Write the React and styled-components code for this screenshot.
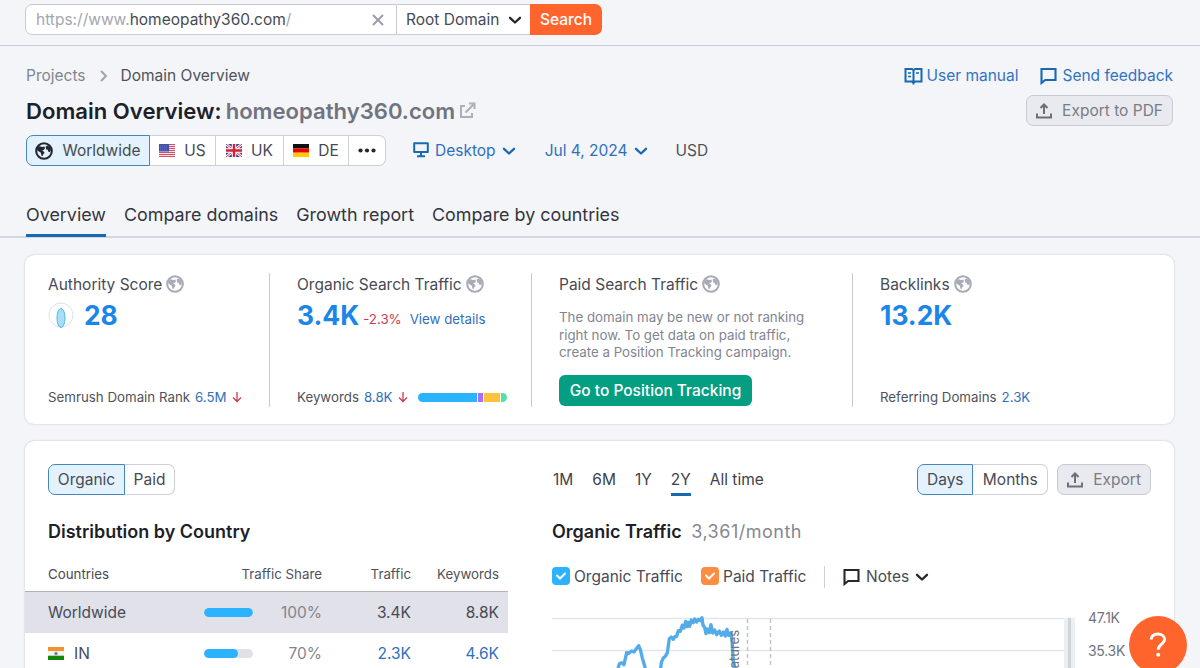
import React from 'react';
import styled, { createGlobalStyle, css } from 'styled-components';

const GlobalStyle = createGlobalStyle`
  * {
    box-sizing: border-box;
  }

  body {
    margin: 0;
    background: #f4f5f9;
    color: #484a54;
    font-family: Inter, "Liberation Sans", sans-serif;
    font-size: 15.5px;
    line-height: 20px;
    overflow: hidden;
  }

  svg {
    display: block;
    flex: none;
  }
`;

const Page = styled.div`
  height: 668px;
  overflow: hidden;
`;

const SearchBar = styled.div`
  display: flex;
  height: 46px;
  padding: 4px 0 0 25px;
  border-bottom: 1px solid #c9cdd9;
`;

const UrlField = styled.div`
  display: flex;
  align-items: center;
  justify-content: space-between;
  width: 372px;
  height: 31px;
  padding: 0 12px 0 10px;
  background: #fff;
  border: 1px solid #c8cbd4;
  border-radius: 7px 0 0 7px;
  color: #a3a6b1;

  b {
    font-weight: 400;
    color: #484a52;
  }
`;

const ScopeSelect = styled.div`
  display: flex;
  align-items: center;
  justify-content: space-between;
  width: 133px;
  height: 31px;
  padding: 0 8px 0 9px;
  background: #fff;
  border: solid #c8cbd4;
  border-width: 1px 0;
`;

const SearchButton = styled.div`
  width: 72px;
  height: 31px;
  padding-top: 6px;
  background: #ff642d;
  border-radius: 0 7px 7px 0;
  color: #fff;
  font-weight: 500;
  text-align: center;
`;

const Header = styled.header`
  height: 192px;
  padding: 20px 27px 0 26px;
  border-bottom: 2px solid #d3d6df;
`;

const HeaderRow = styled.div`
  display: flex;
  align-items: center;
  justify-content: space-between;
  height: ${({ $height }) => $height}px;
`;

const Group = styled.div`
  display: flex;
  align-items: center;
  gap: ${({ $gap = 0 }) => $gap}px;
`;

const Crumb = styled.span`
  color: ${({ $current }) => ($current ? '#50525a' : '#82858f')};
`;

const HelpLink = styled.span`
  display: flex;
  align-items: center;
  gap: ${({ $gap }) => $gap}px;
  color: #3273c0;

  svg {
    margin-top: -1px;
  }
`;

const Title = styled.h1`
  display: flex;
  align-items: center;
  gap: 4px;
  margin: 0;
  color: #1d1f29;
  font-size: 22.1px;
  font-weight: 600;
  line-height: 28px;

  span {
    color: #717480;
  }
`;

const ExportButton = styled.div`
  display: flex;
  align-items: center;
  gap: 9px;
  height: 31px;
  padding: 0 9px 0 8px;
  background: #e9eaf0;
  border: 1px solid #c8cad4;
  border-radius: 7px;
  color: #797b85;
`;

const Segments = styled.div`
  display: flex;
  height: 31px;
`;

const Segment = styled.div`
  display: flex;
  align-items: center;
  justify-content: center;
  gap: ${({ $gap = 9 }) => $gap}px;
  width: ${({ $width }) => $width}px;
  background: #fff;
  border: 1px solid #cdd0d9;
  border-left-width: 0;

  &:first-child {
    border-left-width: 1px;
    border-radius: 7px 0 0 7px;
  }

  &:last-child {
    border-radius: 0 7px 7px 0;
  }

  ${({ $active }) =>
    $active &&
    css`
      background: #e3f2fc;
      border-color: #4388bd;
    `}
`;

const FilterBar = styled.div`
  display: flex;
  align-items: center;
  height: 31px;
`;

const Filter = styled.div`
  display: flex;
  align-items: center;
  gap: 6px;
  margin-left: ${({ $offset }) => $offset}px;
  color: ${({ $plain }) => ($plain ? '#50525a' : '#2f70bd')};
`;

const Tabs = styled.nav`
  display: flex;
  gap: 18px;
  margin-top: 37px;
`;

const Tab = styled.span`
  height: 34px;
  border-bottom: 3px solid ${({ $active }) => ($active ? '#1769b3' : 'transparent')};
  color: #33353d;
  font-size: 17.9px;
  line-height: 24px;
  white-space: nowrap;
`;

const Card = styled.section`
  display: flex;
  width: 1149px;
  height: ${({ $height }) => $height}px;
  margin: 17px 0 0 25px;
  background: #fff;
  border-radius: 9px;
  box-shadow: 0 0 2px rgba(25, 27, 35, 0.28);
`;

const Metric = styled.div`
  display: flex;
  flex-direction: column;
  width: ${({ $width }) => $width}px;
  height: 134px;
  margin-top: 18px;
  padding: 2px 0 0 ${({ $inset = 27 }) => $inset}px;
  border-right: ${({ $last }) => ($last ? '0' : '1px solid #c9cbd2')};
`;

const MetricLabel = styled.div`
  display: flex;
  align-items: center;
  gap: 4px;
  height: 20px;
  white-space: nowrap;

  svg {
    margin-top: -2px;
  }
`;

const MetricValue = styled.div`
  display: flex;
  align-items: center;
  gap: ${({ $gap = 0 }) => $gap}px;
  height: 36px;
  margin-top: 2px;
  white-space: nowrap;

  strong {
    color: #1b86e8;
    font-size: 26.4px;
    font-weight: 700;
  }
`;

const Small = styled.span`
  color: ${({ $color = '#50525a' }) => $color};
  font-size: 13.3px;
  margin-left: ${({ $offset = 0 }) => $offset}px;
  padding-top: ${({ $drop = 0 }) => $drop}px;
  white-space: nowrap;
`;

const MetricFooter = styled.div`
  display: flex;
  align-items: center;
  gap: 5px;
  height: 20px;
  margin-top: auto;
`;

const KeywordBar = styled.div`
  display: flex;
  gap: 1px;
  width: 89px;
  height: 9px;
  margin-left: 5px;
  border-radius: 5px;
  overflow: hidden;

  i {
    height: 9px;
  }
`;

const Note = styled.p`
  margin: 14px 0 0;
  color: #82858f;
  font-size: 13.3px;
  line-height: 17.7px;
  white-space: nowrap;
`;

const TrackingButton = styled.div`
  width: 193px;
  height: 31px;
  margin-top: 13px;
  padding-top: 6px;
  background: #049f82;
  border-radius: 6px;
  color: #fff;
  font-weight: 500;
  text-align: center;
  white-space: nowrap;
`;

const Distribution = styled.div`
  width: 483px;
  padding-top: 23px;
`;

const SectionTitle = styled.h2`
  margin: 25px 0 0;
  color: #1d1f29;
  font-size: 18px;
  font-weight: 600;
  line-height: 24px;
  white-space: nowrap;

  span {
    margin-left: 5px;
    color: #858892;
    font-weight: 400;
    letter-spacing: 0.5px;
  }
`;

const Inset = styled.div`
  padding-left: 23px;
`;

const Row = styled.div`
  display: grid;
  grid-template-columns: 156px 49px 69px 89px 88px;
  align-items: center;
  height: 41px;
  padding-left: 23px;
  background: ${({ $selected }) => ($selected ? '#e0e1e9' : '#fff')};
`;

const HeadRow = styled(Row)`
  height: 35px;
  margin-top: 13px;
  border-bottom: 1px solid #b0b1bb;
  font-size: 13.3px;
`;

const Cell = styled.span`
  color: ${({ $color = '#50525a' }) => $color};
  text-align: right;
  grid-column: ${({ $span }) => ($span ? '2 / span 2' : 'auto')};
`;

const Country = styled.span`
  display: flex;
  align-items: center;
  gap: 10px;
`;

const ShareTrack = styled.div`
  height: 9px;
  border-radius: 5px;
  background: #e0e1e6;
  overflow: hidden;
`;

const ShareFill = styled.div`
  height: 9px;
  border-radius: 5px;
  background: #2bb3ff;
`;

const Trend = styled.div`
  width: 599px;
  margin-left: 44px;
  padding-top: 23px;
`;

const Ranges = styled.div`
  display: flex;
  gap: 19px;
  padding: 6px 0 0 1px;
`;

const Range = styled.span`
  height: 26px;
  border-bottom: 3px solid ${({ $active }) => ($active ? '#1769b3' : 'transparent')};
  color: #40424a;
`;

const TrendTop = styled.div`
  display: flex;
  justify-content: space-between;
  height: 31px;
`;

const Legend = styled.div`
  display: flex;
  align-items: center;
  height: 22px;
  margin-top: 22px;
`;

const LegendItem = styled.div`
  display: flex;
  align-items: center;
  gap: 4px;
  width: ${({ $width }) => $width}px;
  white-space: nowrap;
`;

const Checkbox = styled.span`
  display: flex;
  align-items: center;
  justify-content: center;
  width: 18px;
  height: 18px;
  margin-top: -2px;
  border-radius: 4px;
  background: ${({ $color }) => $color};
`;

const NotesMenu = styled.div`
  display: flex;
  align-items: center;
  gap: 6px;
  height: 22px;
  padding-left: 18px;
  border-left: 1px solid #cfd1d8;
`;

const Chart = styled.div`
  display: flex;
  margin-top: 21px;
`;

const Axis = styled.div`
  margin: -8px 0 0 13px;
  color: #72757f;
  font-size: 14px;
  line-height: 33px;
  letter-spacing: -0.3px;
`;

const HelpBubble = styled.div`
  position: fixed;
  left: 1129px;
  top: 616px;
  display: flex;
  align-items: center;
  justify-content: center;
  width: 58px;
  height: 58px;
  border-radius: 50%;
  background: #ff642d;
`;

const Chevron = ({ color = '#252730' }) => (
  <svg width="14" height="10" viewBox="0 0 14 10" fill="none" stroke={color} strokeWidth="2.3">
    <path d="M2 2.8 7 7.5 12 2.8" strokeLinecap="round" strokeLinejoin="round" />
  </svg>
);

const Globe = ({ size = 18, color = '#a9abb6' }) => (
  <svg width={size} height={size} viewBox="0 0 18 18">
    <circle cx="9" cy="9" r="7.8" fill="none" stroke={color} strokeWidth="2.1" />
    <path
      fill={color}
      d="M2.2 6.4 4.2 4.2 7.4 5 9.4 4.4 10 6.4 8.6 8 7 8.4 8.8 9.4 9.6 11 8.2 12.2 7.6 14.2 6.4 13.4 5.8 10.8 2.4 8.4ZM10.6 4.6 12.6 3.4 15.4 5.4 15.8 8.4 14.6 10.2 13.2 9.4 12.8 7.8 11.2 7.4Z"
    />
  </svg>
);

const Upload = () => (
  <svg width="18" height="18" viewBox="0 0 18 18" fill="none" stroke="#6c6e79" strokeWidth="2">
    <path d="M2 11.5V15.5H16V11.5M9 12V2.5M5.5 6 9 2.5 12.5 6" />
  </svg>
);

const Bubble = ({ color }) => (
  <svg width="17" height="18" viewBox="0 0 17 18" fill="none" stroke={color} strokeWidth="2.1">
    <path d="M1.5 2H15.5V13H5.2L1.5 16Z" />
  </svg>
);

const Book = () => (
  <svg width="19" height="18" viewBox="0 0 19 18" fill="none" stroke="#1769b3" strokeWidth="2">
    <path d="M9.5 3V17.5M1.5 2H8L9.5 3.2 11 2H17.5V14.5H11L9.5 16 8 14.5H1.5Z" />
    <path d="M4 6H7M4 9.5H7M12 6H15" strokeWidth="1.6" />
  </svg>
);

const Monitor = () => (
  <svg width="16" height="17" viewBox="0 0 16 17" fill="none" stroke="#1769b3" strokeWidth="2">
    <path d="M1.2 1.2H14.8V10H1.2Z" strokeLinejoin="round" />
    <path d="M8 10V14M4 14.2H12" />
  </svg>
);

const External = () => (
  <svg width="17" height="17" viewBox="0 0 17 17" fill="none" stroke="#adafb9" strokeWidth="2">
    <path d="M6 4H2V15H13V11M10 1.5H15.5V7M15.5 1.5 6.5 10.5" />
  </svg>
);

const DownArrow = () => (
  <svg width="10" height="12" viewBox="0 0 10 12" fill="none" stroke="#cf3a50" strokeWidth="1.3">
    <path d="M5 1V10.5M1 6.5 5 10.5 9 6.5" />
  </svg>
);

const Check = () => (
  <svg width="10" height="8" viewBox="0 0 10 8" fill="none" stroke="#fff" strokeWidth="2">
    <path d="M1 3.5 4 6.5 9 1.5" strokeLinecap="round" />
  </svg>
);

const FlagUS = () => (
  <svg width="16" height="13" viewBox="0 0 16 13">
    <path fill="#f3dfe4" d="M0 0H16V13H0Z" />
    <path stroke="#ce5364" strokeWidth="1" d="M0 .5H16M0 2.5H16M0 4.5H16M0 6.5H16M0 8.5H16M0 10.5H16M0 12.5H16" />
    <path fill="#434eae" d="M0 0H10V7.5H0Z" />
    <path stroke="#8189cc" strokeWidth=".7" strokeDasharray="1 1" d="M1 2H9M1 4H9M1 6H9" />
  </svg>
);

const FlagUK = () => (
  <svg width="16" height="13" viewBox="0 0 16 13">
    <path fill="#3c4a94" d="M0 0H16V13H0Z" />
    <path stroke="#fff" strokeWidth="2.6" d="M0 0 16 13M16 0 0 13" />
    <path stroke="#d63343" strokeWidth="1" d="M0 0 16 13M16 0 0 13" />
    <path stroke="#fff" strokeWidth="4.4" d="M8 0V13M0 6.5H16" />
    <path stroke="#d61f33" strokeWidth="2.4" d="M8 0V13M0 6.5H16" />
  </svg>
);

const FlagDE = () => (
  <svg width="16" height="13" viewBox="0 0 16 13">
    <path fill="#111" d="M0 0H16V4.5H0Z" />
    <path fill="#e00" d="M0 4.5H16V8.7H0Z" />
    <path fill="#fc0" d="M0 8.7H16V13H0Z" />
  </svg>
);

const FlagIN = () => (
  <svg width="16" height="13" viewBox="0 0 16 13">
    <path fill="#f0932b" d="M0 0H16V4.3H0Z" />
    <path fill="#f4f5f6" d="M0 4.3H16V8.7H0Z" />
    <path fill="#138808" d="M0 8.7H16V13H0Z" />
    <circle cx="8" cy="6.5" r="1.7" fill="#6c83b5" />
  </svg>
);

const VerticalLabel = styled.text`
  fill: #74777f;
  font-size: 13px;
  text-anchor: end;
`;

const TrafficChart = () => (
  <svg width="523" height="60" viewBox="0 0 523 60">
    <path stroke="#e4e5e9" strokeWidth="1.5" d="M0 9.5H523M0 41.5H516" />
    <path fill="#eceff1" d="M512 9H524V60H512Z" />
    <path fill="#cfd4d8" d="M516 9H519V60H516Z" />
    <path stroke="#c2c4ca" strokeWidth="1.5" strokeDasharray="4 3" d="M195.5 10V60M218.5 10V60" />
    <path
      fill="none"
      stroke="#54abea"
      strokeWidth="10"
      strokeLinejoin="round"
      transform="translate(-12 -15) scale(0.3333)"
      d="M232 232 238 210 245 206 252 212 260 176 266 178 275 171 282 174 288 166 296 155 301 166 307 192 313 212 318 232M361 232 364 205 370 192 376 187 382 176 388 134 394 129 400 136 405 128 410 127 415 110 421 112 427 94 432 102 437 82 441 98 445 85 449 97 454 78 460 86 464 75 470 84 475 76 481 80 486 71 489 94 494 100 498 119 503 105 508 116 513 92 518 117 524 108 530 122 538 111 544 124 550 114 556 126 561 106 566 124 573 116 577 150 579 190 584 232"
    />
    <VerticalLabel transform="translate(187 21) rotate(-90)">atures</VerticalLabel>
  </svg>
);

const countries = [
  { code: 'Worldwide', share: 100, traffic: '3.4K', keywords: '8.8K', selected: true },
  { code: 'IN', flag: <FlagIN />, share: 70, traffic: '2.3K', keywords: '4.6K' },
];

const App = () => (
  <Page>
    <GlobalStyle />
    <SearchBar>
      <UrlField>
        <span>
          https://www.<b>homeopathy360.com</b>/
        </span>
        <svg width="12" height="12" viewBox="0 0 12 12" stroke="#9a9da8" strokeWidth="2">
          <path d="M1 1 11 11M11 1 1 11" />
        </svg>
      </UrlField>
      <ScopeSelect>
        Root Domain <Chevron />
      </ScopeSelect>
      <SearchButton>Search</SearchButton>
    </SearchBar>

    <Header>
      <HeaderRow $height={20}>
        <Group $gap={13}>
          <Crumb>Projects</Crumb>
          <svg width="9" height="12" viewBox="0 0 9 12" fill="none" stroke="#a0a3ae" strokeWidth="2">
            <path d="M2 1 7 6 2 11" />
          </svg>
          <Crumb $current>Domain Overview</Crumb>
        </Group>
        <Group $gap={22}>
          <HelpLink $gap={3}>
            <Book /> User manual
          </HelpLink>
          <HelpLink $gap={5}>
            <Bubble color="#1769b3" /> Send feedback
          </HelpLink>
        </Group>
      </HeaderRow>
      <HeaderRow $height={49}>
        <Title>
          Domain Overview: <span>homeopathy360.com</span> <External />
        </Title>
        <ExportButton>
          <Upload /> Export to PDF
        </ExportButton>
      </HeaderRow>
      <FilterBar>
        <Segments>
          <Segment $active $width={124}>
            <Globe color="#252730" /> Worldwide
          </Segment>
          <Segment $width={66}>
            <FlagUS /> US
          </Segment>
          <Segment $width={68}>
            <FlagUK /> UK
          </Segment>
          <Segment $width={65}>
            <FlagDE /> DE
          </Segment>
          <Segment $width={37}>
            <svg width="18" height="5" viewBox="0 0 18 5" fill="#252730">
              <circle cx="2.5" cy="2.5" r="2.1" />
              <circle cx="9" cy="2.5" r="2.1" />
              <circle cx="15.5" cy="2.5" r="2.1" />
            </svg>
          </Segment>
        </Segments>
        <Filter $offset={27}>
          <Monitor /> Desktop <Chevron color="#1769b3" />
        </Filter>
        <Filter $offset={29}>
          Jul 4, 2024 <Chevron color="#1769b3" />
        </Filter>
        <Filter $offset={28} $plain>
          USD
        </Filter>
      </FilterBar>
      <Tabs>
        <Tab $active>Overview</Tab>
        <Tab>Compare domains</Tab>
        <Tab>Growth report</Tab>
        <Tab>Compare by countries</Tab>
      </Tabs>
    </Header>

    <Card $height={169}>
      <Metric $width={245} $inset={23}>
        <MetricLabel>
          Authority Score <Globe />
        </MetricLabel>
        <MetricValue $gap={10}>
          <svg width="26" height="26" viewBox="0 0 26 26">
            <circle cx="13" cy="13" r="12" fill="#fff" stroke="#dfe1e5" />
            <ellipse cx="13" cy="16" rx="4" ry="9.5" fill="#a5dff9" stroke="#52b5e5" />
          </svg>
          <strong>28</strong>
        </MetricValue>
        <MetricFooter>
          <Small>Semrush Domain Rank</Small>
          <Small $color="#2f70bd">6.5M</Small>
          <DownArrow />
        </MetricFooter>
      </Metric>
      <Metric $width={262}>
        <MetricLabel>
          Organic Search Traffic <Globe />
        </MetricLabel>
        <MetricValue>
          <strong>3.4K</strong>
          <Small $offset={4} $drop={8} $color="#c93b55">
            -2.3%
          </Small>
          <Small $offset={8} $drop={8} $color="#2f70bd">
            View details
          </Small>
        </MetricValue>
        <MetricFooter>
          <Small>Keywords</Small>
          <Small $color="#2f70bd">8.8K</Small>
          <DownArrow />
          <KeywordBar>
            <i style={{ width: 60, background: '#2bb3ff' }} />
            <i style={{ width: 5, background: '#ab6cfe' }} />
            <i style={{ width: 16, background: '#fdc23c' }} />
            <i style={{ width: 6, background: '#59ddaa' }} />
          </KeywordBar>
        </MetricFooter>
      </Metric>
      <Metric $width={321}>
        <MetricLabel>
          Paid Search Traffic <Globe />
        </MetricLabel>
        <Note>
          The domain may be new or not ranking
          <br />
          right now. To get data on paid traffic,
          <br />
          create a Position Tracking campaign.
        </Note>
        <TrackingButton>Go to Position Tracking</TrackingButton>
      </Metric>
      <Metric $width={320} $last>
        <MetricLabel>
          Backlinks <Globe />
        </MetricLabel>
        <MetricValue>
          <strong>13.2K</strong>
        </MetricValue>
        <MetricFooter>
          <Small>Referring Domains</Small>
          <Small $color="#2f70bd">2.3K</Small>
        </MetricFooter>
      </Metric>
    </Card>

    <Card $height={260}>
      <Distribution>
        <Inset>
          <Segments>
            <Segment $active $width={77}>
              Organic
            </Segment>
            <Segment $width={50}>Paid</Segment>
          </Segments>
          <SectionTitle>Distribution by Country</SectionTitle>
        </Inset>
        <HeadRow>
          <span>Countries</span>
          <Cell $span>Traffic Share</Cell>
          <Cell>Traffic</Cell>
          <Cell>Keywords</Cell>
        </HeadRow>
        {countries.map(({ code, flag, share, traffic, keywords, selected }) => (
          <Row key={code} $selected={selected}>
            <Country>
              {flag}
              {code}
            </Country>
            <ShareTrack>
              <ShareFill style={{ width: `${share}%` }} />
            </ShareTrack>
            <Cell $color="#82858f">{share}%</Cell>
            <Cell $color={selected ? '#484a54' : '#2f70bd'}>{traffic}</Cell>
            <Cell $color={selected ? '#484a54' : '#2f70bd'}>{keywords}</Cell>
          </Row>
        ))}
      </Distribution>
      <Trend>
        <TrendTop>
          <Ranges>
            <Range>1M</Range>
            <Range>6M</Range>
            <Range>1Y</Range>
            <Range $active>2Y</Range>
            <Range>All time</Range>
          </Ranges>
          <Group $gap={9}>
            <Segments>
              <Segment $active $width={56}>
                Days
              </Segment>
              <Segment $width={75}>Months</Segment>
            </Segments>
            <ExportButton>
              <Upload /> Export
            </ExportButton>
          </Group>
        </TrendTop>
        <SectionTitle>
          Organic Traffic <span>3,361/month</span>
        </SectionTitle>
        <Legend>
          <LegendItem $width={149}>
            <Checkbox $color="#2bb3ff">
              <Check />
            </Checkbox>
            Organic Traffic
          </LegendItem>
          <LegendItem $width={123}>
            <Checkbox $color="#ff8c43">
              <Check />
            </Checkbox>
            Paid Traffic
          </LegendItem>
          <NotesMenu>
            <Bubble color="#252730" /> Notes <Chevron />
          </NotesMenu>
        </Legend>
        <Chart>
          <TrafficChart />
          <Axis>
            <div>47.1K</div>
            <div>35.3K</div>
          </Axis>
        </Chart>
      </Trend>
    </Card>

    <HelpBubble>
      <svg width="18" height="26" viewBox="0 0 18 26" fill="none" stroke="#fff" strokeWidth="2.9">
        <path d="M2 7.5C2.5 3.8 5 2 8.8 2 12.8 2 15.6 4.2 15.6 7.6 15.6 12.3 9.2 12 9.2 17.8" />
        <circle cx="9.2" cy="22.8" r="2" fill="#fff" stroke="none" />
      </svg>
    </HelpBubble>
  </Page>
);

export default App;
